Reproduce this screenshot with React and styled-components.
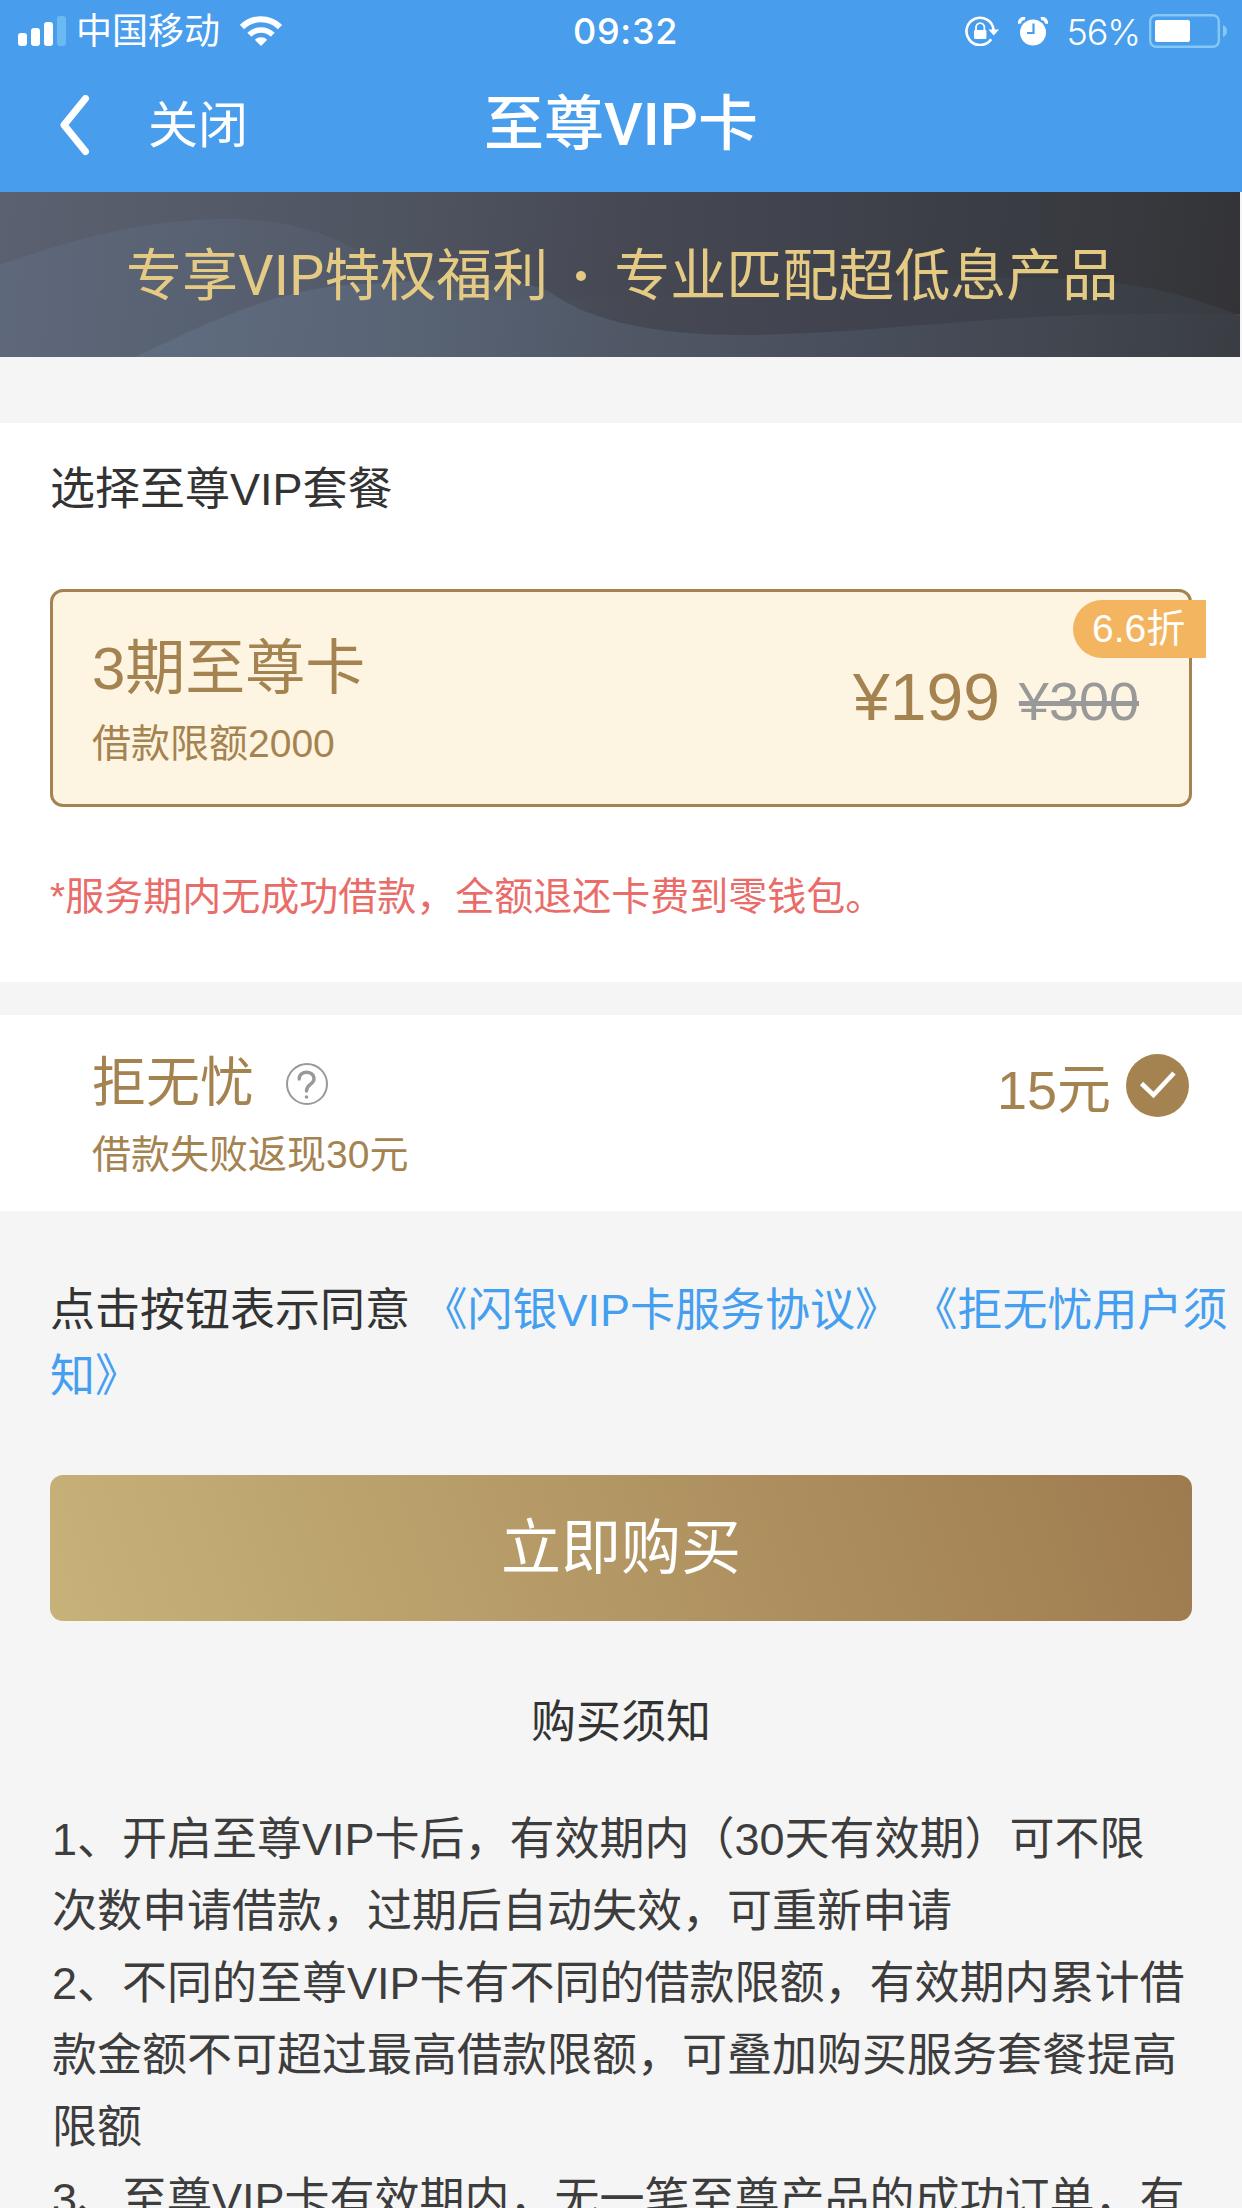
import React, { useState } from 'react';
import styled, { createGlobalStyle } from 'styled-components';

const latin = '"Liberation Sans", "Noto Sans CJK SC", sans-serif';
const system = 'Roboto, "Noto Sans CJK SC", sans-serif';

const notes = [
    ['1、开启至尊VIP卡后，有效期内（30天有效期）可不限', '次数申请借款，过期后自动失效，可重新申请'],
    ['2、不同的至尊VIP卡有不同的借款限额，有效期内累计借', '款金额不可超过最高借款限额，可叠加购买服务套餐提高', '限额'],
    ['3、至尊VIP卡有效期内，无一笔至尊产品的成功订单，有'],
];

function SignalIcon() {
    return (
        <svg width="48" height="30" viewBox="0 0 48 30" fill="#fff">
            <rect x="0" y="17" width="9" height="13" rx="3" />
            <rect x="13" y="12" width="9" height="18" rx="3" />
            <rect x="26" y="6" width="9" height="24" rx="3" />
            <rect x="39" y="0" width="9" height="30" rx="3" fill="#6bb9f3" />
        </svg>
    );
}

function WifiIcon() {
    return (
        <svg width="42" height="30" viewBox="0 0 42 30">
            <path d="M2 11 A27 27 0 0 1 40 11" fill="none" stroke="#fff" strokeWidth="6" />
            <path d="M9.3 18.8 A16.5 16.5 0 0 1 32.7 18.8" fill="none" stroke="#fff" strokeWidth="5.6" />
            <path d="M21 30 L14.8 23.8 A9 9 0 0 1 27.2 23.8 Z" fill="#fff" />
        </svg>
    );
}

function RotationLockIcon() {
    return (
        <svg width="34" height="30" viewBox="0 0 34 30">
            <path d="M26.2 23.2 A13.6 13.6 0 1 1 28.6 14" fill="none" stroke="#fff" strokeWidth="2.6" />
            <path d="M23.4 13.5 H34 L28.7 19.5 Z" fill="#fff" />
            <rect x="9" y="14" width="12.4" height="9" rx="1.2" fill="#fff" />
            <path d="M11 15 V11.5 A4.2 4.4 0 0 1 19.4 11.5 V15" fill="none" stroke="#fff" strokeWidth="1.8" />
        </svg>
    );
}

function AlarmIcon() {
    return (
        <svg width="30" height="29" viewBox="0 0 30 29">
            <circle cx="15" cy="15.5" r="13" fill="#fff" />
            <path d="M1.8 6.6 A4 4 0 0 1 7 1.8" fill="none" stroke="#fff" strokeWidth="3.4" />
            <path d="M28.2 6.6 A4 4 0 0 0 23 1.8" fill="none" stroke="#fff" strokeWidth="3.4" />
            <path d="M15.5 6.5 V16 H9" fill="none" stroke="#489dec" strokeWidth="2.2" />
        </svg>
    );
}

function BatteryIcon() {
    return (
        <svg width="79" height="34" viewBox="0 0 79 34">
            <rect x="1.2" y="1.2" width="68.6" height="31.6" rx="6" fill="none" stroke="#86c8f4" strokeWidth="2.4" />
            <rect x="6" y="6" width="35" height="22" rx="2" fill="#fff" />
            <path d="M74 11 Q78 13 78 17 T74 23 Z" fill="#86c8f4" />
        </svg>
    );
}

function BackIcon() {
    return (
        <svg width="30" height="61" viewBox="0 0 30 61">
            <path d="M25.5 3.5 L4 30 L25.5 56.5" fill="none" stroke="#fff" strokeWidth="7" strokeLinecap="round" strokeLinejoin="round" />
        </svg>
    );
}

function QuestionIcon() {
    return (
        <svg width="42" height="42" viewBox="0 0 42 42" fill="none" stroke="#999">
            <circle cx="21" cy="21" r="20" strokeWidth="2" />
            <path d="M13.2 16 C13.2 7 28 7 28 16 C28 21.5 20.5 21 20.5 28" strokeWidth="3.4" strokeLinecap="round" />
            <circle cx="20.5" cy="34" r="1.8" fill="#999" stroke="none" />
        </svg>
    );
}

function CheckIcon() {
    return (
        <svg width="63" height="63" viewBox="0 0 63 63">
            <circle cx="31.5" cy="31.5" r="31.5" fill="#a58350" />
            <path d="M15.5 29.5 L27.5 41 L48 19" fill="none" stroke="#fff" strokeWidth="4.6" />
        </svg>
    );
}

function BannerWaves() {
    return (
        <Waves viewBox="0 0 1240 165" preserveAspectRatio="none">
            <defs>
                <linearGradient id="waveLeft" x1="0" y1="0" x2="1" y2="0">
                    <stop offset="0" stopColor="#66809a" stopOpacity="0.24" />
                    <stop offset="0.5" stopColor="#66809a" stopOpacity="0.14" />
                    <stop offset="1" stopColor="#66809a" stopOpacity="0" />
                </linearGradient>
                <linearGradient id="waveMid" x1="0" y1="0" x2="1" y2="0">
                    <stop offset="0" stopColor="#7086a0" stopOpacity="0.26" />
                    <stop offset="0.45" stopColor="#7086a0" stopOpacity="0.24" />
                    <stop offset="1" stopColor="#7086a0" stopOpacity="0.12" />
                </linearGradient>
                <linearGradient id="waveRight" x1="0" y1="0" x2="1" y2="0">
                    <stop offset="0" stopColor="#566880" stopOpacity="0" />
                    <stop offset="1" stopColor="#566880" stopOpacity="0.16" />
                </linearGradient>
            </defs>
            <path d="M0 73 C80 45 150 27 225 27 C350 27 370 82 450 100 C500 107 560 107 640 104 V165 H0 Z" fill="url(#waveLeft)" />
            <path d="M135 165 C200 135 280 92 370 92 C460 85 520 85 550 100 C590 130 660 143 740 143 C860 143 1000 122 1130 122 H1240 V165 Z" fill="url(#waveMid)" />
            <path d="M560 106 C760 104 900 86 1020 86 C1120 86 1170 96 1240 124 V122 H1130 C1000 122 860 143 740 143 C660 143 600 130 560 106 Z" fill="url(#waveRight)" />
        </Waves>
    );
}

export default function App() {
    const [insured, setInsured] = useState(true);

    return (
        <Page>
            <GlobalStyle />
            <Header>
                <StatusBar>
                    <StatusLeft>
                        <SignalIcon />
                        <Carrier>中国移动</Carrier>
                        <WifiIcon />
                    </StatusLeft>
                    <Clock>09:32</Clock>
                    <StatusRight>
                        <RotationLockIcon />
                        <AlarmIcon />
                        <Percent>56%</Percent>
                        <BatteryIcon />
                    </StatusRight>
                </StatusBar>
                <NavBar>
                    <NavLeft>
                        <BackIcon />
                        <CloseText>关闭</CloseText>
                    </NavLeft>
                    <Title>至尊VIP卡</Title>
                </NavBar>
            </Header>
            <Banner>
                <BannerWaves />
                <BannerText>专享VIP特权福利</BannerText>
                <BannerDot />
                <BannerText>专业匹配超低息产品</BannerText>
            </Banner>
            <PlanSection>
                <SectionTitle>选择至尊VIP套餐</SectionTitle>
                <PlanCard>
                    <div>
                        <PlanName>3期至尊卡</PlanName>
                        <SubText>借款限额2000</SubText>
                    </div>
                    <Prices>
                        <Price>¥199</Price>
                        <OldPrice>¥300</OldPrice>
                    </Prices>
                    <Discount>6.6折</Discount>
                </PlanCard>
                <Warning>*服务期内无成功借款，全额退还卡费到零钱包。</Warning>
            </PlanSection>
            <InsuranceRow>
                <div>
                    <InsuranceName>拒无忧<QuestionIcon /></InsuranceName>
                    <SubText>借款失败返现30元</SubText>
                </div>
                <InsurancePrice onClick={() => setInsured(!insured)}>
                    <Amount>15元</Amount>
                    {insured && <CheckIcon />}
                </InsurancePrice>
            </InsuranceRow>
            <Agreement>
                点击按钮表示同意 <a>《闪银VIP卡服务协议》</a> <a>《拒无忧用户须<br />知》</a>
            </Agreement>
            <BuyButton>立即购买</BuyButton>
            <NotesTitle>购买须知</NotesTitle>
            <Notes>
                {notes.map((lines, i) => (
                    <li key={i}>
                        {lines.map((line) => <NoteLine key={line}>{line}</NoteLine>)}
                    </li>
                ))}
            </Notes>
        </Page>
    );
}

const GlobalStyle = createGlobalStyle`
    * {
        box-sizing: border-box;
    }
    body {
        margin: 0;
        background: #f5f5f5;
        overflow: hidden;
    }
    svg {
        display: block;
        flex: none;
    }
`

const Page = styled.div`
    width: 1242px;
    height: 2208px;
    overflow: hidden;
    background: #f5f5f5;
    color: #333;
    font-family: ${latin};
    font-weight: 400;
    white-space: nowrap;
    text-spacing-trim: space-all;
`

const Header = styled.header`
    height: 192px;
    background: #489dec;
    color: #fff;
    font-family: ${system};
`

const StatusBar = styled.div`
    display: grid;
    grid-template-columns: 1fr auto 1fr;
    align-items: center;
    height: 60px;
    padding: 0 14px 0 18px;
`

const StatusLeft = styled.div`
    display: flex;
    align-items: center;
`

const Carrier = styled.span`
    margin: 0 20px 0 10px;
    padding-top: 2px;
    font-size: 36px;
    line-height: 58px;
`

const Clock = styled.span`
    padding-left: 5px;
    font-family: Inter, sans-serif;
    font-size: 36px;
    font-weight: 500;
    letter-spacing: 0.7px;
    line-height: 62px;
`

const StatusRight = styled.div`
    display: flex;
    align-items: center;
    justify-content: flex-end;
    gap: 19px;
`

const Percent = styled.span`
    margin-right: -10px;
    padding-top: 1px;
    font-family: Inter, sans-serif;
    font-size: 36px;
    font-weight: 300;
    letter-spacing: -1.1px;
`

const NavBar = styled.nav`
    display: grid;
    grid-template-columns: 1fr auto 1fr;
    align-items: center;
    height: 132px;
    padding: 0 60px 3px 60px;
`

const NavLeft = styled.div`
    display: flex;
    align-items: center;
    gap: 58px;
    padding-top: 2px;
`

const CloseText = styled.span`
    padding-top: 1px;
    font-size: 50px;
    line-height: 60px;
`

const Title = styled.h1`
    margin: 0;
    font-size: 60px;
    font-weight: 500;
    line-height: 80px;
`

const Banner = styled.div`
    position: relative;
    display: flex;
    align-items: center;
    width: 1240px;
    height: 165px;
    padding: 2px 0 0 126px;
    background: linear-gradient(97deg, #5c6171 0%, #4f5461 32%, #464954 50%, #3e404a 70%, #37393e 90%, #333336 100%);
`

const Waves = styled.svg`
    position: absolute;
    inset: 0;
    width: 100%;
    height: 100%;
`

const BannerText = styled.span`
    position: relative;
    color: #e4ca83;
    font-family: ${system};
    font-size: 56px;
    line-height: 80px;
`

const BannerDot = styled.i`
    position: relative;
    width: 10px;
    height: 10px;
    margin: 0 28px 0 28px;
    border-radius: 50%;
    background: #e4ca83;
`

const PlanSection = styled.section`
    height: 559px;
    margin-top: 66px;
    padding: 33px 50px 0;
    background: #fff;
`

const SectionTitle = styled.h2`
    margin: 0;
    font-size: 45px;
    font-weight: 400;
    line-height: 68px;
`

const PlanCard = styled.div`
    position: relative;
    display: flex;
    justify-content: space-between;
    height: 218px;
    margin-top: 65px;
    padding: 35px 50px 0 39px;
    border: 3px solid #a58350;
    border-radius: 13px;
    background: #fdf4e1;
    color: #a58350;
`

const PlanName = styled.div`
    font-size: 60px;
    line-height: 84px;
`

const SubText = styled.div`
    font-size: 39px;
    line-height: 65px;
`

const Prices = styled.div`
    display: flex;
    align-items: baseline;
    gap: 19px;
    padding-top: 30px;
`

const Price = styled.span`
    font-size: 66px;
    line-height: 80px;
`

const OldPrice = styled.del`
    color: #999;
    font-size: 54px;
`

const Discount = styled.span`
    position: absolute;
    top: 8px;
    right: -17px;
    width: 133px;
    height: 58px;
    padding-left: 19px;
    border-radius: 29px 0 0 29px;
    background: #f3b560;
    color: #fff;
    font-size: 39px;
    line-height: 58px;
`

const Warning = styled.p`
    margin: 61px 0 0;
    color: #e96c69;
    font-size: 39px;
    line-height: 58px;
`

const InsuranceRow = styled.section`
    display: flex;
    justify-content: space-between;
    height: 196px;
    margin-top: 33px;
    padding: 29px 53px 0 92px;
    background: #fff;
    color: #a58350;
`

const InsuranceName = styled.div`
    display: flex;
    align-items: center;
    gap: 32px;
    font-size: 54px;
    line-height: 78px;

    svg {
        margin-top: 2px;
    }
`

const InsurancePrice = styled.div`
    display: flex;
    align-items: center;
    gap: 15px;
    height: 82px;
`

const Amount = styled.span`
    padding-top: 10px;
    font-size: 54px;
    line-height: 78px;
`

const Agreement = styled.p`
    margin: 67px 0 0 50px;
    font-size: 45px;
    line-height: 66px;

    a {
        color: #459ff0;
    }
`

const BuyButton = styled.button`
    display: block;
    width: 1142px;
    height: 146px;
    margin: 65px 50px 0;
    padding: 0 0 11px;
    border: 0;
    border-radius: 13px;
    background: linear-gradient(72deg, #c7b279, #9e7b4f);
    color: #fff;
    font-family: ${latin};
    font-size: 60px;
`

const NotesTitle = styled.h3`
    margin: 69px 0 0;
    font-size: 45px;
    font-weight: 400;
    line-height: 66px;
    text-align: center;
`

const Notes = styled.ul`
    margin: 48px 0 0 52px;
    padding: 0;
    list-style: none;
    color: #3d3d3d;
`

const NoteLine = styled.div`
    font-size: 45px;
    line-height: 72px;
`
